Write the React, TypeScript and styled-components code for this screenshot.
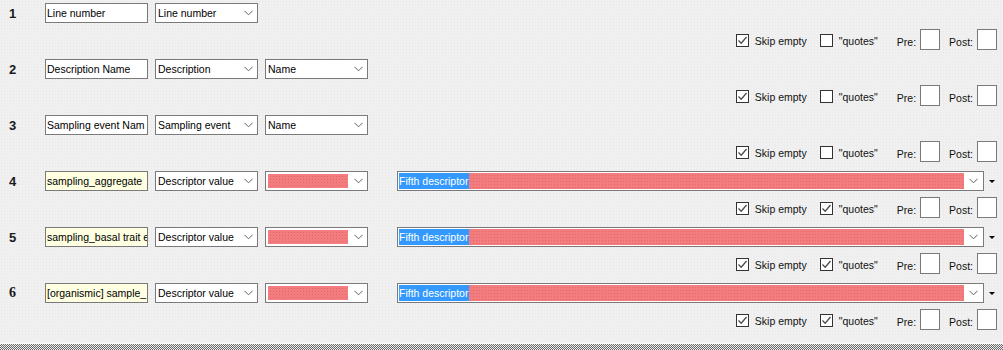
import React from "react";
import styled, { createGlobalStyle, css } from "styled-components";

const GlobalStyle = createGlobalStyle`
  html, body {
    margin: 0;
    padding: 0;
    background: #f0f0f0;
  }
  body {
    font-family: "Liberation Sans", Arial, sans-serif;
    font-size: 10.5px;
    color: #000;
  }
`;

type Row = {
  n: string;
  text: string;
  yellow?: boolean;
  combos: (string | null)[];
  big?: boolean;
  quotes: boolean;
  serif?: boolean;
};

const rows: Row[] = [
  { n: "1", text: "Line number", combos: ["Line number"], quotes: false },
  { n: "2", text: "Description Name", combos: ["Description", "Name"], quotes: false },
  { n: "3", text: "Sampling event Nam", combos: ["Sampling event", "Name"], quotes: false },
  { n: "4", text: "sampling_aggregate", yellow: true, combos: ["Descriptor value", null], big: true, quotes: true },
  { n: "5", text: "sampling_basal trait e", yellow: true, combos: ["Descriptor value", null], big: true, quotes: true },
  { n: "6", text: "[organismic] sample_", yellow: true, combos: ["Descriptor value", null], big: true, quotes: true, serif: true },
];

const Page = styled.div`
  width: 1003px;
  height: 350px;
  display: flex;
  flex-direction: column;
  overflow: hidden;
  background-color: #f0f0f0;
  background-image: radial-gradient(rgba(205, 205, 215, 0.22) 0.6px, transparent 0.7px);
  background-size: 3px 3px;
`;

const List = styled.div`
  height: 343px;
  display: flex;
  flex-direction: column;
`;

const Mapping = styled.div`
  height: 56px;
  padding-top: 3px;
  box-sizing: border-box;
  display: flex;
  flex-direction: column;
  gap: 6px;
`;

const FieldLine = styled.div`
  height: 20px;
  display: flex;
  align-items: center;
`;

const Num = styled.div<{ $serif?: boolean }>`
  width: 45px;
  padding-left: 9px;
  box-sizing: border-box;
  font-weight: bold;
  color: #1a1a1a;
  font-family: ${(p) =>
    p.$serif ? `"Liberation Serif", "Times New Roman", serif` : `"Liberation Sans", Arial, sans-serif`};
  font-size: ${(p) => (p.$serif ? "14px" : "13px")};
`;

const TextBox = styled.div<{ $yellow?: boolean }>`
  width: 103px;
  height: 20px;
  box-sizing: border-box;
  border: 1px solid #7a7a7a;
  background: ${(p) => (p.$yellow ? "#ffffe1" : "#fff")};
  padding-left: 1px;
  line-height: 18px;
  white-space: nowrap;
  overflow: hidden;
`;

const Combo = styled.div<{ $wide?: boolean }>`
  width: ${(p) => (p.$wide ? "587px" : "103px")};
  height: 20px;
  box-sizing: border-box;
  border: 1px solid #7a7a7a;
  background: #fff;
  margin-left: ${(p) => (p.$wide ? "29px" : "7px")};
  display: flex;
  align-items: center;
  padding: ${(p) => (p.$wide ? "1px" : "2px 0 2px 2px")};
`;

const ComboText = styled.div`
  flex: 1;
  white-space: nowrap;
  overflow: hidden;
  line-height: 16px;
`;

const redFill = css`
  background-color: #f37d7e;
  background-image: radial-gradient(rgba(185, 80, 80, 0.4) 0.55px, transparent 0.7px);
  background-size: 3px 3px;
  background-position: 1px 1px;
`;

const RedField = styled.div<{ $wide?: boolean }>`
  ${redFill};
  height: ${(p) => (p.$wide ? "16px" : "14px")};
  width: ${(p) => (p.$wide ? "566px" : "80px")};
  display: flex;
  align-items: center;
`;

const Highlight = styled.span`
  background: #3399ff;
  color: #fff;
  line-height: 16px;
  padding-right: 1px;
`;

const ChevronBox = styled.div`
  width: 18px;
  display: flex;
  justify-content: center;
  align-items: center;
  margin-left: auto;
`;

const SideArrow = styled.div`
  margin-left: 5px;
  width: 0;
  height: 0;
  border-left: 3px solid transparent;
  border-right: 3px solid transparent;
  border-top: 3px solid #000;
`;

const OptionsLine = styled.div`
  height: 21px;
  display: flex;
  align-items: center;
  justify-content: flex-end;
  padding-right: 6px;
`;

const Check = styled.div`
  width: 13px;
  height: 13px;
  box-sizing: border-box;
  border: 1px solid #333;
  background: #fff;
  display: flex;
  align-items: center;
  justify-content: center;
  margin-top: 2px;
`;

const CheckLabel = styled.span<{ $w: number }>`
  margin-left: 6px;
  width: ${(p) => p.$w}px;
  color: #111;
  margin-top: 2px;
`;

const FixLabel = styled.span<{ $ml: number }>`
  margin-left: ${(p) => p.$ml}px;
  margin-right: 4px;
  margin-top: 4px;
  color: #111;
`;

const SmallBox = styled.div`
  width: 20px;
  height: 21px;
  box-sizing: border-box;
  border: 1px solid #7a7a7a;
  background: #fff;
`;

const Splitter = styled.div`
  height: 7px;
  border-top: 1px solid #fcfcfc;
  box-sizing: border-box;
  background-image: repeating-conic-gradient(#6a6a6a 0 25%, #ececec 0 50%);
  background-size: 2px 2px;
`;

function Chevron() {
  return (
    <svg width="9" height="6" viewBox="0 0 9 6">
      <path d="M0.5 0.8 L4.5 4.8 L8.5 0.8" fill="none" stroke="#606060" strokeWidth="1" />
    </svg>
  );
}

function Tick() {
  return (
    <svg width="11" height="11" viewBox="0 0 11 11">
      <path d="M1.5 5.5 L4.2 8.2 L9.5 2" fill="none" stroke="#4a4a4a" strokeWidth="1.3" />
    </svg>
  );
}

function ComboBox({ value, wide }: { value: string | null; wide?: boolean }) {
  return (
    <Combo $wide={wide}>
      {value === null ? (
        <RedField $wide={wide}>{wide && <Highlight>Fifth descriptor</Highlight>}</RedField>
      ) : (
        <ComboText>{value}</ComboText>
      )}
      <ChevronBox>
        <Chevron />
      </ChevronBox>
    </Combo>
  );
}

export default function App() {
  return (
    <Page>
      <GlobalStyle />
      <List>
        {rows.map((r) => (
          <Mapping key={r.n}>
            <FieldLine>
              <Num $serif={r.serif}>{r.n}</Num>
              <TextBox $yellow={r.yellow}>{r.text}</TextBox>
              {r.combos.map((c, i) => (
                <ComboBox key={i} value={c} />
              ))}
              {r.big && (
                <>
                  <ComboBox value={null} wide />
                  <SideArrow />
                </>
              )}
            </FieldLine>
            <OptionsLine>
              <Check>
                <Tick />
              </Check>
              <CheckLabel $w={65}>Skip empty</CheckLabel>
              <Check>{r.quotes && <Tick />}</Check>
              <CheckLabel $w={46}>"quotes"</CheckLabel>
              <FixLabel $ml={12}>Pre:</FixLabel>
              <SmallBox />
              <FixLabel $ml={9}>Post:</FixLabel>
              <SmallBox />
            </OptionsLine>
          </Mapping>
        ))}
      </List>
      <Splitter />
    </Page>
  );
}
